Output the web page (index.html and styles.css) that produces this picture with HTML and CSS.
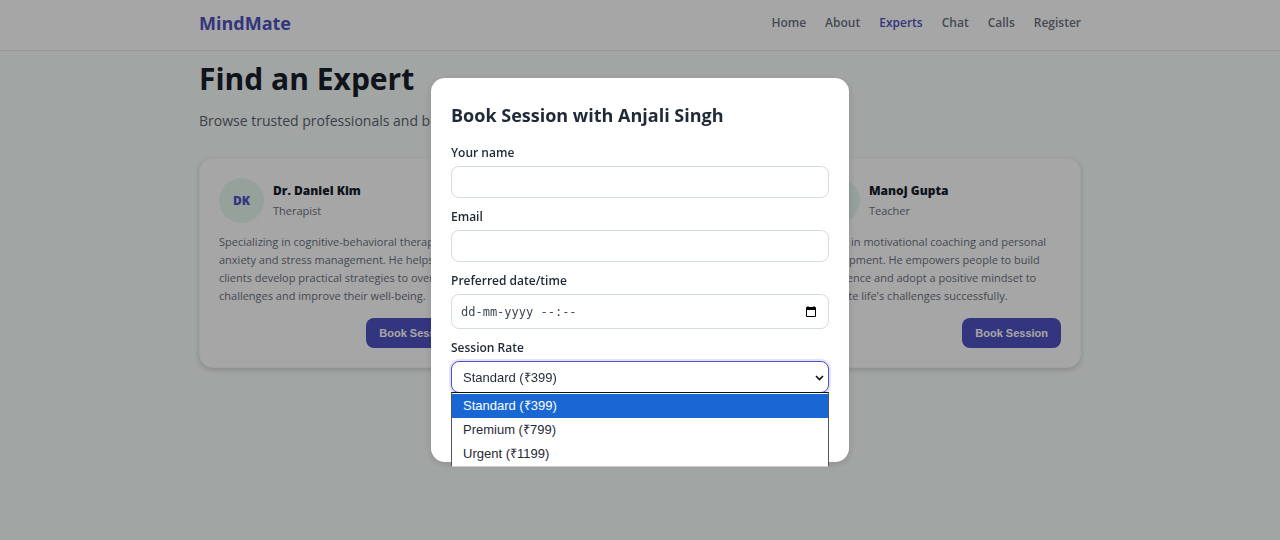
FILE: index.html
```html
<!DOCTYPE html>
<html lang="en">
<head>
<meta charset="utf-8">
<meta name="viewport" content="width=device-width, initial-scale=1">
<title>MindMate – Experts</title>
<link rel="stylesheet" href="styles.css">
</head>
<body>
<header class="site-header">
  <div class="container header-row">
    <a class="logo" href="#">MindMate</a>
    <nav class="nav">
      <a href="#">Home</a>
      <a href="#">About</a>
      <a href="#" class="active">Experts</a>
      <a href="#">Chat</a>
      <a href="#">Calls</a>
      <a href="#">Register</a>
    </nav>
  </div>
</header>
<main class="container">
  <h1 class="page-title">Find an Expert</h1>
  <p class="lead">Browse trusted professionals and book a session.</p>
  <section class="cards">
    <article class="card">
      <div class="person">
        <div class="avatar">DK</div>
        <div><h2 class="name">Dr. Daniel Kim</h2><p class="role">Therapist</p></div>
      </div>
      <p class="bio">Specializing in cognitive-behavioral therapy, anxiety and stress management. He helps his clients develop practical strategies to overcome challenges and improve their well-being.</p>
      <button class="btn" type="button">Book Session</button>
    </article>
    <article class="card">
      <div class="person">
        <div class="avatar">AS</div>
        <div><h2 class="name">Anjali Singh</h2><p class="role">Counselor</p></div>
      </div>
      <button class="btn" type="button">Book Session</button>
    </article>
    <article class="card">
      <div class="person">
        <div class="avatar">MG</div>
        <div><h2 class="name">Manoj Gupta</h2><p class="role">Teacher</p></div>
      </div>
      <p class="bio">Expert in motivational coaching and personal development. He empowers people to build confidence and adopt a positive mindset to navigate life's challenges successfully.</p>
      <button class="btn" type="button">Book Session</button>
    </article>
  </section>
</main>
<div class="overlay">
  <form class="modal" role="dialog" aria-labelledby="modal-title">
    <h2 class="modal-title" id="modal-title">Book Session with Anjali Singh</h2>
    <div class="fields">
      <div class="field">
        <label for="name">Your name</label>
        <input class="control" id="name" type="text">
      </div>
      <div class="field">
        <label for="email">Email</label>
        <input class="control" id="email" type="email">
      </div>
      <div class="field">
        <label for="when">Preferred date/time</label>
        <div class="control date-control">
          <input class="date-input" id="when" type="text" placeholder="dd-mm-yyyy --:--">
          <button class="date-button" type="button" aria-label="Open calendar">
            <svg width="10" height="12" viewBox="0 0 10 12"><path fill="#000" fill-rule="evenodd" d="M1.5 0h1v1h5V0h1v1H9q1 0 1 1v8q0 1-1 1H1q-1 0-1-1V2q0-1 1-1h.5zM1 4v6h8V4z"/></svg>
          </button>
        </div>
      </div>
      <div class="field">
        <label for="rate">Session Rate</label>
        <div class="select-wrap">
          <select class="control rate" id="rate">
            <option>Standard (₹399)</option>
            <option>Premium (₹799)</option>
            <option>Urgent (₹1199)</option>
          </select>
          <svg class="chevron" width="9" height="6" viewBox="0 0 9 6"><path d="M1 1l3.5 3.5L8 1" fill="none" stroke="#111" stroke-width="1.6"/></svg>
          <ul class="options" role="listbox" aria-label="Session Rate">
            <li role="option" aria-selected="true" class="selected">Standard (₹399)</li>
            <li role="option" aria-selected="false">Premium (₹799)</li>
            <li role="option" aria-selected="false">Urgent (₹1199)</li>
          </ul>
        </div>
      </div>
    </div>
    <div class="actions"><button class="btn" type="submit">Book</button></div>
  </form>
</div>
</body>
</html>
```
FILE: styles.css
```css
* { box-sizing: border-box; }
body {
  margin: 0;
  min-height: 100vh;
  overflow: hidden;
  background: #f8fdfa;
  color: #1f2937;
  font-family: "Open Sans", "Noto Sans", sans-serif;
}
h1, h2, p, ul { margin: 0; padding: 0; }
.container { max-width: 882px; margin: 0 auto; }
.site-header {
  background: #fff;
  border-bottom: 1px solid #dfeae6;
}
.header-row {
  display: flex;
  justify-content: space-between;
  align-items: center;
  padding: 10px 0 14px;
}
.logo {
  font-size: 18px;
  line-height: 26px;
  font-weight: 700;
  color: #4f52c3;
  text-decoration: none;
}
.nav { display: flex; gap: 19px; }
.nav a {
  font-size: 12px;
  line-height: 20px;
  font-weight: 600;
  color: #6b7280;
  text-decoration: none;
}
.nav .active { color: #4f52c3; }
.page-title {
  padding-top: 8px;
  color: #17202c;
  font-size: 30px;
  line-height: 40px;
  font-weight: 700;
}
.lead {
  margin: 11px 0 26px;
  font-size: 14px;
  line-height: 22px;
  color: #5b6472;
}
.cards {
  display: grid;
  grid-template-columns: repeat(3, 1fr);
  gap: 12px;
}
.card {
  display: flex;
  flex-direction: column;
  padding: 19px;
  border: 1px solid #f7faf9;
  border-radius: 14px;
  background: #fff;
  box-shadow: 0 2px 5px rgba(31, 41, 55, 0.18);
}
.person { display: flex; align-items: center; gap: 9px; }
.avatar {
  display: flex;
  align-items: center;
  justify-content: center;
  width: 45px;
  height: 45px;
  border-radius: 50%;
  background: #e6f8f0;
  color: #4f52c3;
  font-size: 12px;
  font-weight: 800;
}
.name { color: #17202c; font-size: 12px; line-height: 20px; font-weight: 800; }
.role { font-size: 11px; line-height: 20px; color: #6b7280; }
.bio {
  margin: 10px 0 13px;
  font-size: 11px;
  line-height: 18px;
  color: #6b7280;
}
.btn {
  align-self: flex-end;
  margin-top: auto;
  padding: 7px 13px;
  border: 0;
  border-radius: 8px;
  background: #4f52c3;
  color: #fff;
  font: 700 11px/16px "Liberation Sans", Arial, sans-serif;
}
.overlay {
  position: fixed;
  inset: 0;
  display: flex;
  align-items: center;
  justify-content: center;
  background: rgba(0, 0, 0, 0.35);
}
.modal {
  width: 90%;
  max-width: 418px;
  padding: 20px;
  border-radius: 14px;
  background: #fff;
  box-shadow: 0 2px 8px rgba(0, 0, 0, 0.14);
}
.modal-title {
  margin-bottom: 12px;
  font-size: 18px;
  line-height: 34px;
  font-weight: 700;
}
.fields { display: flex; flex-direction: column; gap: 10px; }
.field { display: flex; flex-direction: column; gap: 4px; }
.field label { font-size: 12px; line-height: 18px; font-weight: 600; }
.control {
  width: 100%;
  height: 32px;
  padding: 0 11px;
  border: 1px solid #d3dedb;
  border-radius: 8px;
  background: #fff;
  color: #1f2937;
  font: 13px "Liberation Sans", Arial, sans-serif;
}
.date-control {
  display: flex;
  align-items: center;
  height: 35px;
  padding: 0 12px 0 9px;
}
.date-input {
  flex: 1;
  min-width: 0;
  padding: 0;
  border: 0;
  outline: 0;
  background: none;
  font: 12px "DejaVu Sans Mono", monospace;
}
.date-input::placeholder { color: #3f4856; opacity: 1; }
.date-button { display: flex; padding: 0; border: 0; background: none; }
.select-wrap { position: relative; }
.rate {
  display: block;
  appearance: none;
  border-color: #4f52c3;
  outline: 0;
  box-shadow: 0 0 0 2px rgba(79, 82, 195, 0.16);
}
.chevron { position: absolute; right: 5px; top: 14px; pointer-events: none; }
.options {
  position: absolute;
  top: 31px;
  left: 0;
  right: 0;
  padding-top: 1px;
  border: 1px solid #555;
  border-top-color: #111;
  border-bottom-color: #ccc;
  background: #fff;
  list-style: none;
  font: 13px/24px "Liberation Sans", Arial, sans-serif;
}
.options li { padding: 0 11px; }
.options .selected { background: #1967d2; color: #fff; }
.actions { display: flex; justify-content: flex-end; padding-top: 19px; }
```
